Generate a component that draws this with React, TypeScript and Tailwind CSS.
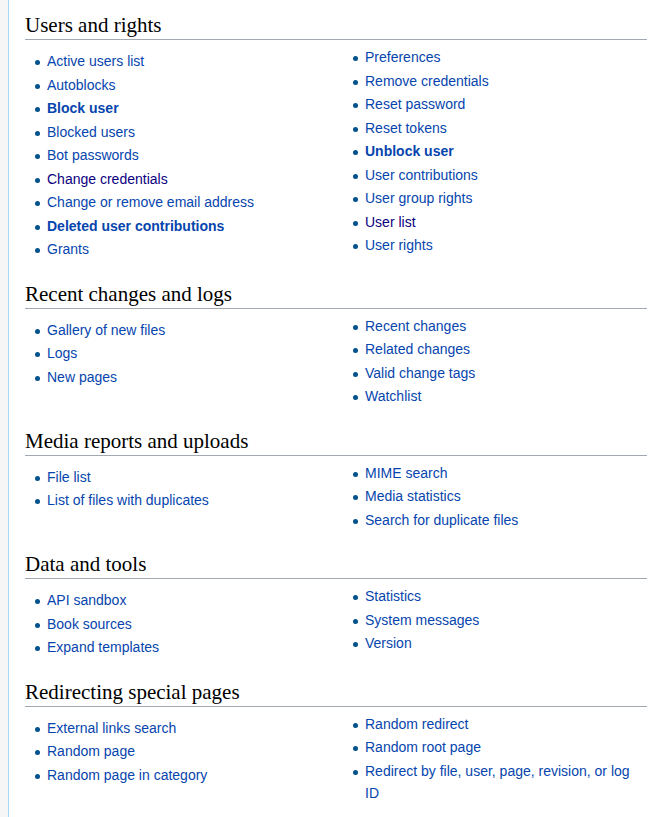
import React from 'react';

type Link = { label: string; bold?: boolean; visited?: boolean };

interface Section {
  title: string;
  left: Link[];
  right: Link[];
}

const sections: Section[] = [
  {
    title: 'Users and rights',
    left: [
      { label: 'Active users list' },
      { label: 'Autoblocks' },
      { label: 'Block user', bold: true },
      { label: 'Blocked users' },
      { label: 'Bot passwords' },
      { label: 'Change credentials', visited: true },
      { label: 'Change or remove email address' },
      { label: 'Deleted user contributions', bold: true },
      { label: 'Grants' },
    ],
    right: [
      { label: 'Preferences' },
      { label: 'Remove credentials' },
      { label: 'Reset password' },
      { label: 'Reset tokens' },
      { label: 'Unblock user', bold: true },
      { label: 'User contributions' },
      { label: 'User group rights' },
      { label: 'User list', visited: true },
      { label: 'User rights' },
    ],
  },
  {
    title: 'Recent changes and logs',
    left: [{ label: 'Gallery of new files' }, { label: 'Logs' }, { label: 'New pages' }],
    right: [
      { label: 'Recent changes' },
      { label: 'Related changes' },
      { label: 'Valid change tags' },
      { label: 'Watchlist' },
    ],
  },
  {
    title: 'Media reports and uploads',
    left: [{ label: 'File list' }, { label: 'List of files with duplicates' }],
    right: [
      { label: 'MIME search' },
      { label: 'Media statistics' },
      { label: 'Search for duplicate files' },
    ],
  },
  {
    title: 'Data and tools',
    left: [{ label: 'API sandbox' }, { label: 'Book sources' }, { label: 'Expand templates' }],
    right: [{ label: 'Statistics' }, { label: 'System messages' }, { label: 'Version' }],
  },
  {
    title: 'Redirecting special pages',
    left: [
      { label: 'External links search' },
      { label: 'Random page' },
      { label: 'Random page in category' },
    ],
    right: [
      { label: 'Random redirect' },
      { label: 'Random root page' },
      { label: 'Redirect by file, user, page, revision, or log ID' },
    ],
  },
];

function PageList({ items, first }: { items: Link[]; first?: boolean }) {
  return (
    <ul className={first ? 'pt-[4px]' : ''}>
      {items.map((item) => (
        <li key={item.label} className="relative pl-[22px] mb-[1.5px] leading-[22px]">
          <span className="absolute left-[10px] top-[10px] w-[5px] h-[5px] rounded-full bg-[#00528c]" />
          <a
            href="#"
            className={`${item.visited ? 'text-[#0b0080]' : 'text-[#0645ad]'} ${
              item.bold ? 'font-bold' : ''
            } no-underline`}
          >
            {item.label}
          </a>
        </li>
      ))}
    </ul>
  );
}

export default function App() {
  return (
    <div className="min-h-screen bg-[#f6f6f6] pl-[8px]">
      <div
        className="min-h-screen bg-white border-l border-[#a7d7f9] pl-[16px] pr-[8px] pt-[12px] pb-[20px] text-[14px] text-[#202122]"
        style={{ fontFamily: '"Liberation Sans", Arial, sans-serif' }}
      >
        {sections.map((section, i) => (
          <section key={section.title} className={i > 0 ? 'mt-[19px]' : ''}>
            <h2
              className="text-[21px] leading-[27px] text-black border-b border-[#a2a9b1]"
              style={{ fontFamily: '"Liberation Serif", Georgia, Times, serif' }}
            >
              {section.title}
            </h2>
            <div className="grid grid-cols-2 gap-x-[14px] mt-[6px]">
              <PageList items={section.left} first />
              <PageList items={section.right} />
            </div>
          </section>
        ))}
      </div>
    </div>
  );
}
